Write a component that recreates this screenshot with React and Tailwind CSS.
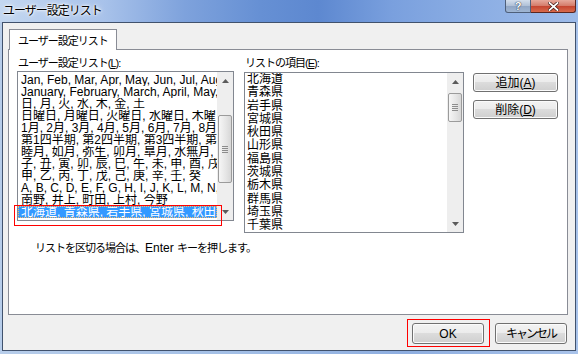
import React from 'react'

const list1 = [
  'Jan, Feb, Mar, Apr, May, Jun, Jul, Aug, Sep, Oct, Nov, Dec',
  'January, February, March, April, May, June, July, August, September',
  '日, 月, 火, 水, 木, 金, 土',
  '日曜日, 月曜日, 火曜日, 水曜日, 木曜日, 金曜日, 土曜日',
  '1月, 2月, 3月, 4月, 5月, 6月, 7月, 8月, 9月, 10月, 11月, 12月',
  '第1四半期, 第2四半期, 第3四半期, 第4四半期',
  '睦月, 如月, 弥生, 卯月, 皐月, 水無月, 文月, 葉月, 長月',
  '子, 丑, 寅, 卯, 辰, 巳, 午, 未, 申, 酉, 戌, 亥',
  '甲, 乙, 丙, 丁, 戊, 己, 庚, 辛, 壬, 癸',
  'A, B, C, D, E, F, G, H, I, J, K, L, M, N, O, P, Q, R, S',
  '南野, 井上, 町田, 上村, 今野',
]

const list2 = ['北海道', '青森県', '岩手県', '宮城県', '秋田県', '山形県', '福島県', '茨城県', '栃木県', '群馬県', '埼玉県', '千葉県']

const Arrow = ({ down }) => (
  <svg width="7" height="4" viewBox="0 0 7 4">
    {down ? <path d="M0 0h7L3.5 4z" fill="#5b5b5b" /> : <path d="M0 4h7L3.5 0z" fill="#5b5b5b" />}
  </svg>
)

// vista-ish vertical scrollbar, thumb placement passed as full classes
const ScrollBar = ({ thumbClass }) => (
  <div className="w-[16px] h-full bg-[#eeeeee] flex flex-col">
    <div className="h-[17px] flex items-center justify-center">
      <Arrow />
    </div>
    <div className="flex-1 px-[1px]">
      <div className={`${thumbClass} rounded-[2px] border border-[#9b9b9b] bg-[linear-gradient(90deg,#f6f6f6,#e6e6e6_55%,#d7d7d7)] flex flex-col items-center justify-center gap-[1px]`}>
        <div className="w-[6px] h-[1px] bg-[#8c8c8c]" />
        <div className="w-[6px] h-[1px] bg-[#8c8c8c]" />
        <div className="w-[6px] h-[1px] bg-[#8c8c8c]" />
        <div className="w-[6px] h-[1px] bg-[#8c8c8c]" />
      </div>
    </div>
    <div className="h-[17px] flex items-center justify-center">
      <Arrow down />
    </div>
  </div>
)

const Button = ({ children, className = '' }) => (
  <div
    className={`h-[19px] rounded-[3px] border border-[#707070] bg-[linear-gradient(180deg,#f3f3f3_0%,#ebebeb_50%,#dcdcdc_50%,#cfcfcf_100%)] shadow-[inset_0_0_0_1px_#fbfbfb] flex items-center justify-center text-[12px] leading-[14px] text-black whitespace-nowrap ${className}`}
  >
    {children}
  </div>
)

export default function App() {
  return (
    <div className="w-[578px] h-[354px] overflow-hidden flex flex-col bg-[linear-gradient(90deg,#b7cdea,#a3bfe6_40%,#8eaee0_70%,#a9c3ea)] font-['Liberation_Sans','Noto_Sans_CJK_JP',sans-serif] text-[12px] text-black">
      {/* Title bar */}
      <div className="h-[22px] flex items-start bg-[linear-gradient(90deg,#c3d7f0_0%,#a8c2ea_18%,#7ea2dc_32%,#6690d4_45%,#5d88d0_55%,#7aa0de_68%,#89ace3_80%,#9dbbe9_100%)]">
        <div className="pl-[3px] pt-[3px] leading-[16px] text-[12px] tracking-[-1px] whitespace-nowrap [text-shadow:0_0_6px_#fff,0_0_3px_#fff,0_0_2px_#fff]">
          ユーザー設定リスト
        </div>
        <div className="ml-auto mr-[2px] flex h-[13px]">
          <div className="w-[26px] h-[13px] rounded-bl-[3px] border border-t-0 border-[#4e5f7a] bg-[linear-gradient(180deg,#d3deec,#aebfd6_50%,#90a5c3_50%,#9fb6d4)] flex items-center justify-center">
            <span className="text-[11px] leading-[11px] font-bold text-white [text-shadow:0_0_1px_#1d2c44,0_0_1px_#1d2c44]">?</span>
          </div>
          <div className="w-[45px] h-[13px] rounded-br-[3px] border border-l-0 border-t-0 border-[#5a2620] bg-[linear-gradient(180deg,#e6a99c,#d47a68_50%,#c4432f_50%,#d86a4c)] flex items-center justify-center">
            <svg width="11" height="9" viewBox="0 0 11 9">
              <path d="M1.5 1l8 7M9.5 1l-8 7" stroke="#3b1610" strokeWidth="3.2" strokeLinecap="square" />
              <path d="M1.5 1l8 7M9.5 1l-8 7" stroke="#fff" strokeWidth="1.8" strokeLinecap="square" />
            </svg>
          </div>
        </div>
      </div>

      {/* Client area */}
      <div className="mx-[2px] mb-[3px] flex-1 border border-[#41526d] bg-[#f0f0f0] pt-[6px] pl-[5px] pr-[7px] flex flex-col">
        {/* Tab */}
        <div className="relative z-10 -mb-[1px] ml-[1px] w-[108px] h-[21px] border border-b-0 border-[#898c95] bg-white flex items-center pl-[8px] pt-[1px] leading-[14px] text-[11px] tracking-[-1px] whitespace-nowrap">
          ユーザー設定リスト
        </div>

        {/* Tab page */}
        <div className="h-[266px] border border-[#898c95] bg-white flex flex-col">
          <div className="flex">
            {/* Left list */}
            <div className="ml-[8px] w-[217px] flex flex-col">
              <div className="h-[21px] pt-[6px] pl-[1px] leading-[14px] text-[11px] tracking-[-1px] whitespace-nowrap">
                ユーザー設定リスト(<span className="underline">L</span>):
              </div>
              <div className="relative h-[150px] border border-[#828790] flex">
                <div className="flex-1 min-w-0 overflow-hidden pt-[2px]">
                  {list1.map((t, i) => (
                    <div key={i} className="h-[12px] leading-[12px] pl-[3px] whitespace-nowrap overflow-hidden">
                      {t}
                    </div>
                  ))}
                  <div className="h-[12px] leading-[10px] pl-[2px] whitespace-nowrap overflow-hidden bg-[#3399ff] text-white border border-dotted border-[#f2b86a]">
                    北海道, 青森県, 岩手県, 宮城県, 秋田県, 山形県
                  </div>
                </div>
                <ScrollBar thumbClass="mt-[26px] h-[68px]" />
                <div className="absolute -left-[4px] top-[133px] w-[208px] h-[21px] border border-[#ff0000]" />
              </div>
            </div>

            {/* Right list */}
            <div className="ml-[10px] w-[220px] flex flex-col">
              <div className="h-[22px] pt-[6px] pl-[1px] leading-[14px] text-[11px] tracking-[-1px] whitespace-nowrap">
                リストの項目(<span className="underline">E</span>):
              </div>
              <div className="h-[161px] border border-[#828790] flex">
                <div className="flex-1 min-w-0 overflow-hidden">
                  {list2.map((t) => (
                    <div key={t} className="h-[13.3px] leading-[13px] pl-[2px] whitespace-nowrap">
                      {t}
                    </div>
                  ))}
                </div>
                <ScrollBar thumbClass="mt-[3px] h-[29px]" />
              </div>
            </div>

            {/* Add / delete */}
            <div className="ml-[9px] mt-[23px] w-[85px] flex flex-col gap-[8px]">
              <Button>
                追加(<span className="underline">A</span>)
              </Button>
              <Button>
                削除(<span className="underline">D</span>)
              </Button>
            </div>
          </div>

          <div className="mt-[8px] pl-[26px] leading-[14px] text-[11px] tracking-[-1px] whitespace-nowrap">
            リストを区切る場合は、<span className="text-[12px] tracking-normal">Enter </span>キーを押します。
          </div>
        </div>

        {/* OK / Cancel */}
        <div className="mt-[8px] flex justify-end gap-[11px] pr-[1px]">
          <div className="relative">
            <Button className="w-[72px] h-[21px] border-[#3c7fb1] shadow-[inset_0_0_0_1px_#9fe0f8,inset_0_0_0_2px_#d5f1fc]">
              OK
            </Button>
            <div className="absolute -left-[5px] -top-[4px] w-[83px] h-[28px] border border-[#ff0000]" />
          </div>
          <Button className="w-[72px] h-[21px] text-[11px] tracking-[-2px]">キャンセル</Button>
        </div>
      </div>
    </div>
  )
}
